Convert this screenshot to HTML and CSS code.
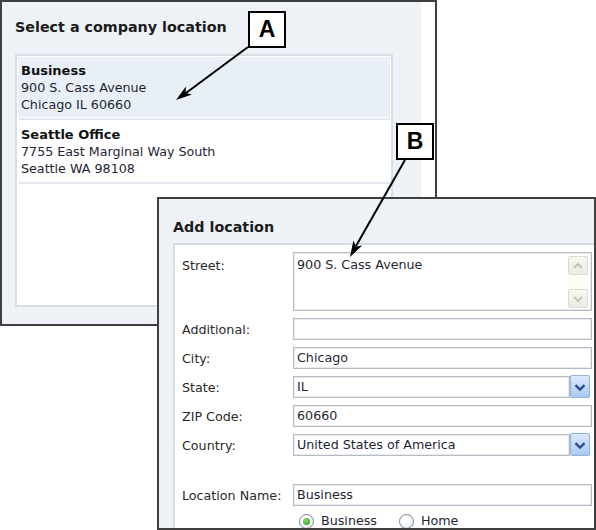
FILE: index.html
```html
<!DOCTYPE html>
<html>
<head>
<meta charset="utf-8">
<link rel="stylesheet" href="styles.css">
</head>
<body>
<div class="canvas">
  <section class="win win-a">
    <div class="win-main">
      <h2 class="win-title">Select a company location</h2>
      <div class="loc-list">
        <div class="loc selected">
          <b>Business</b>
          <span>900 S. Cass Avenue</span>
          <span>Chicago IL 60660</span>
        </div>
        <div class="sep"></div>
        <div class="loc">
          <b>Seattle Office</b>
          <span>7755 East Marginal Way South</span>
          <span>Seattle WA 98108</span>
        </div>
        <div class="sep"></div>
      </div>
    </div>
    <div class="win-strip"></div>
  </section>

  <section class="win win-b">
    <h2 class="win-title">Add location</h2>
    <div class="form-box">
      <div class="form-grid">
        <label class="lbl lbl-top">Street:</label>
        <div class="field textarea">
          <span class="ta-text">900 S. Cass Avenue</span>
          <div class="vscroll">
            <span class="sbtn"><svg viewBox="0 0 16 16" width="16" height="16"><polyline points="4,10 8,6 12,10" /></svg></span>
            <span class="sbtn"><svg viewBox="0 0 16 16" width="16" height="16"><polyline points="4,6 8,10 12,6" /></svg></span>
          </div>
        </div>

        <label class="lbl">Additional:</label>
        <div class="field input"></div>

        <label class="lbl">City:</label>
        <div class="field input">Chicago</div>

        <label class="lbl">State:</label>
        <div class="select">
          <div class="field input sel-text">IL</div>
          <span class="dd"><svg viewBox="0 0 20 22" width="20" height="22"><polyline points="5,9 10,14 15,9" /></svg></span>
        </div>

        <label class="lbl">ZIP Code:</label>
        <div class="field input">60660</div>

        <label class="lbl">Country:</label>
        <div class="select">
          <div class="field input sel-text">United States of America</div>
          <span class="dd"><svg viewBox="0 0 20 22" width="20" height="22"><polyline points="5,9 10,14 15,9" /></svg></span>
        </div>

        <div class="spacer"></div>

        <label class="lbl">Location Name:</label>
        <div class="field input">Business</div>

        <div></div>
        <div class="radios">
          <span class="radio on"><span class="dot"></span></span><span class="rlbl">Business</span>
          <span class="radio"></span><span class="rlbl">Home</span>
        </div>
      </div>
    </div>
  </section>

  <div class="callout callout-a">A</div>
  <div class="callout callout-b">B</div>

  <svg class="arrows" viewBox="0 0 596 530" width="596" height="530">
    <line x1="248" y1="47" x2="186" y2="93" />
    <polygon points="176,100 191.9,94.5 185.7,92.9 185.9,86.5" />
    <line x1="405" y1="160" x2="356" y2="246" />
    <polygon points="350,257 362.2,245.4 355.9,246.5 353.4,240.6" />
  </svg>
</div>
</body>
</html>
```

FILE: styles.css
```css
* { box-sizing: border-box; }
html, body { margin: 0; padding: 0; background: #fff; }
body {
  font-family: "DejaVu Sans", "Liberation Sans", sans-serif;
  font-size: 12.7px;
  color: #1f1f33;
}
.canvas {
  position: relative;
  width: 596px;
  height: 530px;
  overflow: hidden;
}

/* windows (screenshots placed on a free canvas) */
.win {
  position: absolute;
  border: 2px solid #3f3f3f;
  background: #eef2f6;
}
.win-a {
  left: 0; top: 0;
  width: 437px; height: 326px;
  display: flex;
}
.win-main {
  width: 419px;
  padding: 16px 0 0 13px;
}
.win-strip {
  flex: 1;
  background: #fff;
}
.win-title {
  margin: 0;
  font-size: 14.3px;
  line-height: 18px;
  font-weight: bold;
  color: #1c1c1c;
}

.loc-list {
  margin-top: 18px;
  width: 378px;
  height: 253px;
  border: 2px solid #d5dde6;
  background: #fff;
  padding: 1px 1px 0 1px;
}
.loc {
  height: 60px;
  padding: 5px 4px 4px 3px;
  display: flex;
  flex-direction: column;
  line-height: 17px;
  white-space: nowrap;
}
.loc b { font-weight: bold; font-size: 13px; color: #111; }
.loc.selected { background: #e8eff7; }
.sep {
  height: 2px;
  margin: 1px 0 1px 1px;
  background: #e2e8ee;
}

.win-b {
  left: 157px; top: 197px;
  width: 439px; height: 333px;
  padding: 19px 0 0 14px;
  overflow: hidden;
  display: flex;
  flex-direction: column;
}
.win-b .win-title { margin-bottom: 7px; }
.form-box {
  flex: 1;
  background: #fff;
  border: 2px solid #d5dde6;
  border-right: 0;
  border-bottom: 0;
  padding: 7px 2px 0 7px;
}
.form-grid {
  display: grid;
  grid-template-columns: 111px 1fr;
  row-gap: 7px;
  align-items: center;
}
.lbl {
  color: #2a2a2a;
  line-height: 17px;
  white-space: nowrap;
}
.lbl-top { align-self: start; padding-top: 5px; }

.field {
  border: 1px solid #b4bdc4;
  box-shadow: inset 0 0 0 1px #e6eaee;
  background: #fff;
  color: #1f1f33;
  line-height: 18px;
  padding: 1px 3px;
  white-space: nowrap;
  overflow: hidden;
}
.input { height: 22px; }
.textarea {
  height: 59px;
  display: flex;
  padding: 3px 3px 2px 3px;
}
.ta-text { flex: 1; line-height: 17px; }
.vscroll {
  width: 20px;
  display: flex;
  flex-direction: column;
  justify-content: space-between;
  background: #fdfdf8;
}
.sbtn {
  height: 19px;
  border: 1px solid #dcdcd2;
  border-radius: 2px;
  background: linear-gradient(#f7f7f3, #ecebe4);
  display: flex;
  align-items: center;
  justify-content: center;
}
.sbtn svg polyline {
  fill: none;
  stroke: #c3c3bb;
  stroke-width: 2;
}

.select {
  display: flex;
  width: calc(100% - 2px);
  align-items: stretch;
}
.sel-text { flex: 1; }
.dd {
  width: 20px;
  height: 23px;
  margin-top: -1px;
  border: 1px solid #8fb4e4;
  border-radius: 2px;
  background: linear-gradient(#dbe9fc, #a8caf4);
  display: flex;
  align-items: center;
  justify-content: center;
}
.dd svg polyline {
  fill: none;
  stroke: #2c4d8c;
  stroke-width: 2.6;
}

.spacer { grid-column: 1 / -1; height: 14px; }

.radios {
  display: flex;
  align-items: center;
  height: 16px;
  padding-left: 6px;
}
.radio {
  width: 15px;
  height: 15px;
  border-radius: 50%;
  border: 1px solid #7d8690;
  background: radial-gradient(circle at 40% 35%, #ffffff 30%, #dde2e7 100%);
  display: flex;
  align-items: center;
  justify-content: center;
}
.radio .dot {
  width: 7px;
  height: 7px;
  border-radius: 50%;
  background: radial-gradient(circle at 40% 35%, #7fdc6a, #259a25);
}
.rlbl { margin: 0 22px 0 7px; line-height: 16px; }

/* callouts and arrows drawn over the windows */
.callout {
  position: absolute;
  width: 38px;
  height: 37px;
  border: 2px solid #000;
  background: #fff;
  font-family: "Liberation Sans", Arial, sans-serif;
  font-weight: bold;
  font-size: 23px;
  line-height: 33px;
  text-align: center;
  color: #000;
}
.callout-a { left: 248px; top: 11px; }
.callout-b { left: 396px; top: 123px; }
.arrows {
  position: absolute;
  left: 0; top: 0;
  pointer-events: none;
}
.arrows line { stroke: #000; stroke-width: 2; }
.arrows polygon { fill: #000; }
```
